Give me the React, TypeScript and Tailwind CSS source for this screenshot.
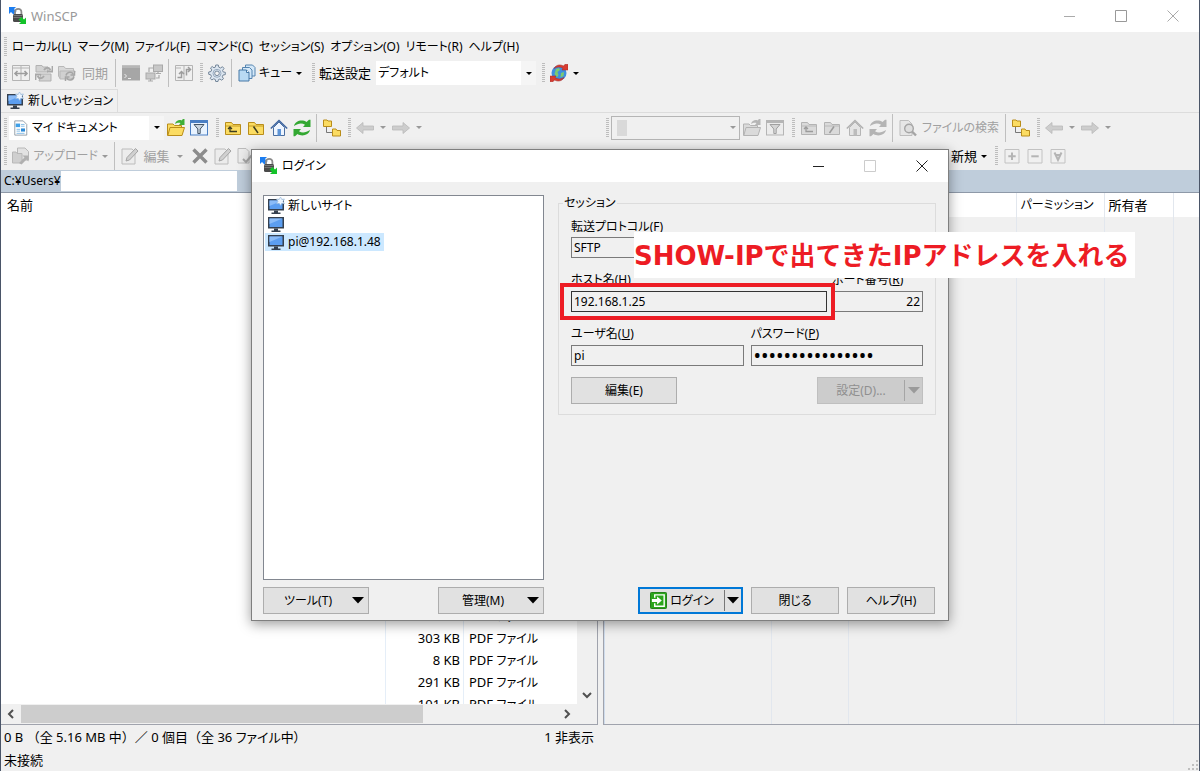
import React from "react";
import type { ReactNode } from "react";

/* ---------- toolbar primitives ---------- */

const Grip = ({ className = "" }: { className?: string }) => (
  <span className={`flex w-2 shrink-0 justify-center ${className}`}>
    <svg width="3" height="20" viewBox="0 0 3 20" aria-hidden="true">
      <path d="M1.5 0V20" stroke="#bdbdbd" strokeWidth="3" strokeDasharray="1 1" />
    </svg>
  </span>
);

const Sep = () => (
  <span className="flex w-[7px] shrink-0 justify-center">
    <span className="h-7 w-px bg-[#bfbfbf]" />
  </span>
);

const Tool = ({ label, children, className = "w-[23px]" }: { label: string; children: ReactNode; className?: string }) => (
  <button type="button" aria-label={label} className={`flex h-6 shrink-0 items-center justify-center ${className}`}>
    {children}
  </button>
);

const Caret = ({ color = "#000" }: { color?: string }) => (
  <svg width="6" height="3" viewBox="0 0 6 3" aria-hidden="true">
    <path d="M0 0H6L3 3Z" fill={color} />
  </svg>
);

const BigCaret = ({ color = "#000" }: { color?: string }) => (
  <svg width="12" height="7" viewBox="0 0 12 7" aria-hidden="true">
    <path d="M0 0H12L6 6.5Z" fill={color} />
  </svg>
);

/* ---------- icons ---------- */

const Svg = ({ children, size = 18 }: { children: ReactNode; size?: number }) => (
  <svg width={size} height={size} viewBox="0 0 18 18" fill="none" aria-hidden="true" className="shrink-0">
    {children}
  </svg>
);

const LockIcon = () => (
  <Svg>
    <path d="M0 0H7L5 2L7.500 4.500L4.500 7.500L2 5L0 7Z" fill="#1c7df0" />
    <path d="M6 8V5a3.200 3.200 0 0 1 6.400 0V8" stroke="#8b8b8b" strokeWidth="1.800" />
    <rect x="4" y="7" width="10" height="8" rx="1.500" fill="#4a4a4a" />
    <path d="M4.500 8.500H13.500M4.500 10.500H13.500" stroke="#777" />
    <path d="M17 17H10L12 15L9.500 12.500L12.500 10L15 12.500L17 10.500Z" fill="#14c32a" />
  </Svg>
);

const MonitorIcon = ({ star = false }: { star?: boolean }) => (
  <Svg>
    <rect x="1" y="2" width="16" height="11.500" fill="#35404f" />
    <rect x="2.500" y="3.500" width="13" height="8.500" fill="#5c9ef0" />
    <path d="M2.500 3.500H15.500L2.500 9Z" fill="#8bbcf8" />
    <path d="M7 13.500H11V15.500H13.500V17H4.500V15.500H7Z" fill="#35404f" />
    {star && <path d="M13.500 0L14.800 2.300L17.500 2L16 4.300L17.500 6.800L14.800 6.300L13.500 8.500L12.200 6.300L9.500 6.800L11 4.300L9.500 2L12.200 2.300Z" fill="#eef6ff" stroke="#8fb4d8" strokeWidth=".6" />}
  </Svg>
);

const CompareIcon = () => (
  <Svg>
    <path d="M.5 1.500H17.500V16.500H.5ZM9 1.500V16.500M.5 4H17.500" stroke="#b4b4b4" />
    <path d="M3 9.500H15M5.500 7L3 9.500L5.500 12M12.500 7L15 9.500L12.500 12" stroke="#9d9d9d" strokeWidth="1.600" />
  </Svg>
);

const SyncFoldersIcon = () => (
  <Svg>
    <path d="M1 1.500H7L8 3H13V8H1Z" fill="#d2d2d2" stroke="#b2b2b2" />
    <path d="M6 10H16V17H4Z" fill="#d2d2d2" stroke="#b2b2b2" />
    <path d="M9 6C11 3 14 3 15.500 6M17.500 2V7.500H12M9 12C7 15 4 15 2.500 12M.5 16V10.500H6" stroke="#a8a8a8" strokeWidth="1.800" />
  </Svg>
);

const FolderSyncIcon = () => (
  <Svg>
    <path d="M.5 2.500H6L7.500 4.500H15.500V14.500H2L.5 12Z" fill="#d8d8d8" stroke="#b8b8b8" />
    <path d="M2 7H17L15 15H2Z" fill="#d0d0d0" stroke="#b8b8b8" />
    <path d="M8 11.500C9 7.500 14 7.500 15 10M16.500 7V11H12.500M16 12.500C15 17 10 17 9 14M7.500 17V13H11.500" stroke="#a5a5a5" strokeWidth="1.500" />
  </Svg>
);

const TerminalIcon = () => (
  <Svg>
    <rect y="1.500" width="18" height="15" fill="#a6a6a6" />
    <path d="M0 1.500H18V4H0Z" fill="#b7b7b7" />
    <path d="M2.500 10L4.500 12L2.500 14M6 14.500H9" stroke="#eee" />
  </Svg>
);

const TwoPcIcon = () => (
  <Svg>
    <rect x="8.500" y="1" width="9" height="6.500" fill="#c8c8c8" stroke="#a9a9a9" />
    <rect x="1" y="9" width="9" height="6" fill="#c8c8c8" stroke="#a9a9a9" />
    <path d="M5.500 15V17M3 17H8M13 7.500V9.500M11 9.500H16M4 8V4H8M14 11V14H11" stroke="#a9a9a9" strokeWidth="1.200" />
  </Svg>
);

const BrowseSyncIcon = () => (
  <Svg>
    <path d="M.5 1.500H17.500V16.500H.5ZM.5 4H6M12 16.500H17.500M9 1.500V16.500" stroke="#b4b4b4" />
    <path d="M2.500 13.500H6.500V7.500M4 10L6.500 7.500L9 10M15.500 5.500H11.500V11.500M13 3L15.500 5.500L13 8" stroke="#9d9d9d" strokeWidth="1.500" />
  </Svg>
);

const GearIcon = () => (
  <Svg>
    <path d="M7.700 1H10.300L10.800 3.200L12.500 4L14.500 2.700L16 4.500L14.600 6.400L15.200 8L17.300 8.300V10.600L15 11L14.300 12.800L15.500 14.700L13.700 16.200L11.900 15L10.400 15.600L10 17.500H7.700L7.300 15.500L5.700 14.800L3.800 16L2.200 14.300L3.400 12.500L2.800 10.800L.7 10.300V8L3 7.500L3.700 5.900L2.500 4L4.200 2.500L6 3.800L7.300 3.200Z" fill="#dce6f0" stroke="#75879a" />
    <circle cx="9" cy="9.300" r="4" stroke="#98abc0" />
    <circle cx="9" cy="9.300" r="2.300" fill="#f3f3f3" stroke="#75879a" />
  </Svg>
);

const QueueIcon = () => (
  <Svg>
    <path d="M7.500 1H14.500L17 3.500V12H7.500Z" fill="#d4e8f8" stroke="#5484b0" />
    <path d="M4.500 3.500H11.500L14 6V14.500H4.500Z" fill="#d4e8f8" stroke="#5484b0" />
    <path d="M1 6H8.500L11 8.500V17H1Z" fill="#b9daf3" stroke="#4678a6" />
    <path d="M8.500 6V8.500H11" fill="#fff" stroke="#4678a6" />
  </Svg>
);

const GlobeSyncIcon = () => (
  <Svg>
    <circle cx="9" cy="9" r="7.500" fill="#3f8ee0" />
    <path d="M6 5L9 4L10 6L7.500 8L8.500 11L7 13.500L4.500 10ZM11 9L14 8L13.500 12L10.500 13.500Z" fill="#7ccb70" />
    <path d="M4 4.500C6 .8 10 0 13.500 2L15 .3H18V6H12L13 4.200C10 2.600 7 2.600 4 4.500Z" fill="#d73c32" stroke="#a52b24" strokeWidth=".5" />
    <path d="M14 13.500C12 17.200 8 18 4.500 16L3 17.700H0V12H6L5 13.800C8 15.400 11 15.400 14 13.500Z" fill="#d73c32" stroke="#a52b24" strokeWidth=".5" />
  </Svg>
);

const DocsIcon = () => (
  <Svg size={16}>
    <path d="M2 1H11.500L15.500 5V17H2Z" fill="#fff" stroke="#8b97a3" />
    <path d="M3 4H8V8H3Z" fill="#3fa0e8" />
    <path d="M9 5H13M9 7H13M4 10.500H8M4 12.500H8M4 15H13" stroke="#7bb7e4" />
    <path d="M9 9.500H13.500V13H9Z" fill="#2b8ad8" />
  </Svg>
);

const palette = (off: boolean) =>
  off
    ? { fill: "#dadada", line: "#b3b3b3", ink: "#9b9b9b", arrow: "#b5b5b5" }
    : { fill: "#fbdc62", line: "#b98d1a", ink: "#3d3d20", arrow: "#3faf38" };

const OpenFolderIcon = ({ off = false }: { off?: boolean }) => {
  const c = palette(off);
  return (
    <Svg>
      <path d="M.5 16.500V5H6L7.500 6.500H14.500V9" fill={c.fill} stroke={c.line} />
      <path d="M3 8.500H17.500L15 16.500H.8Z" fill={c.fill} stroke={c.line} />
      <path d="M8 5C9 1 13 .5 14.500 1.500L16 0H17.500V6H12L13.500 4C12 3.500 10 3.500 8 5Z" fill={c.arrow} />
    </Svg>
  );
};

const FilterIcon = ({ off = false }: { off?: boolean }) => {
  const a = off ? "#b5b5b5" : "#4a7fc4";
  return (
    <Svg>
      <rect x=".5" y="1.500" width="17" height="14.500" fill={off ? "#ececec" : "#e8f3ff"} stroke={a} />
      <path d="M1 2H17V4H1Z" fill={a} />
      <path d="M4 5.500H14L10.200 10V14.500H7.800V10Z" fill={off ? "#d5d5d5" : "#c9d4de"} stroke={off ? "#a0a0a0" : "#445566"} />
    </Svg>
  );
};

const FolderMarkIcon = ({ off = false, kind }: { off?: boolean; kind: "up" | "root" | "slash" }) => {
  const c = palette(off);
  return (
    <Svg>
      <path d="M1.500 3.500H7.500L9 5.500H16.500V15.500H1.500Z" fill={c.fill} stroke={c.line} />
      <path d="M2 7H16" stroke={c.line} strokeWidth=".8" />
      {kind === "up" && <path d="M6 8V12.500H13M4 10L6 8L8 10" stroke={c.ink} strokeWidth="1.300" />}
      {kind === "root" && <path d="M6.500 7.500L11 14" stroke={c.ink} strokeWidth="1.500" />}
      {kind === "slash" && <path d="M11 7.500L6.500 14" stroke={c.ink} strokeWidth="1.500" />}
    </Svg>
  );
};

const HomeIcon = ({ off = false }: { off?: boolean }) => (
  <Svg>
    <path d="M3.500 8.500V16.500H14.500V8.500L9 3Z" fill={off ? "#e4e4e4" : "#eef5ff"} stroke={off ? "#b5b5b5" : "#4a6ea0"} />
    <path d="M.8 9.500L9 1.500L17.200 9.500" stroke={off ? "#b0b0b0" : "#3d64a0"} strokeWidth="1.500" />
    <rect x="7.500" y="10" width="3.500" height="6.500" fill={off ? "#bcbcbc" : "#5d94d6"} />
  </Svg>
);

const RefreshIcon = ({ off = false }: { off?: boolean }) => {
  const c = off ? "#b4b4b4" : "#33a832";
  return (
    <Svg>
      <path d="M1 7C2 2 9 0 13.500 3L16 .8H17.500V8H10L12 5.800C8.500 3.500 5 4.500 1 7Z" fill={c} />
      <path d="M17 11C16 16 9 18 4.500 15L2 17.200H.5V10H8L6 12.200C9.500 14.500 13 13.500 17 11Z" fill={c} />
    </Svg>
  );
};

const TreeIcon = () => (
  <Svg>
    <path d="M3.500 8V13.500H10" stroke="#777" />
    <path d="M.5 1H4L5 2H8.500V7.500H.5ZM9.500 10H13L14 11.500H17.500V17H9.500Z" fill="#fbdc62" stroke="#b98d1a" />
  </Svg>
);

const ArrowIcon = ({ back = false }: { back?: boolean }) => (
  <Svg>
    <path
      d={back ? "M.5 9L7 3.500V7H17.500V11H7V14.500Z" : "M17.500 9L11 3.500V7H.5V11H11V14.500Z"}
      fill="#cdcdcd"
      stroke="#b9b9b9"
      strokeWidth=".8"
    />
  </Svg>
);

const UploadIcon = () => (
  <Svg>
    <path d="M5.500 1H13L16.500 4.500V13H5.500Z" fill="#e2e2e2" stroke="#b8b8b8" />
    <path d="M.5 5H4L5 6.500H10V16H.5Z" fill="#cfcfcf" stroke="#b8b8b8" />
    <path d="M7 16L12.500 10.500L10.500 8.500H16.500V14.500L14.500 12.500L9.500 17.500Z" fill="#b0b0b0" />
  </Svg>
);

const EditIcon = () => (
  <Svg>
    <path d="M1 2H11L14 5V17H1Z" fill="#ececec" stroke="#bcbcbc" />
    <path d="M5 14L6 10.500L14.500 1.500L17 4L8.500 13Z" fill="#d0d0d0" stroke="#a5a5a5" />
  </Svg>
);

const DeleteIcon = () => (
  <Svg>
    <path d="M2.500 2.500L15.500 15.500M15.500 2.500L2.500 15.500" stroke="#8c8c8c" strokeWidth="3.400" />
  </Svg>
);

const CheckDocIcon = () => (
  <Svg>
    <path d="M1 1.500H9L12 4.500V16H1Z" fill="#ececec" stroke="#bcbcbc" />
    <path d="M6 12L9 15L15 8" stroke="#a8a8a8" strokeWidth="2" />
  </Svg>
);

const FindIcon = () => (
  <Svg>
    <path d="M1 1.500H9.500L13 5V16.500H1Z" fill="#e6e6e6" stroke="#bdbdbd" />
    <circle cx="10" cy="9.500" r="4.300" fill="#dedede" stroke="#a5a5a5" strokeWidth="1.400" />
    <path d="M13 12.500L17 16.500" stroke="#a5a5a5" strokeWidth="2.400" />
  </Svg>
);

const BoxedIcon = ({ d }: { d: string }) => (
  <Svg>
    <path d="M2 2.500H16V16H2Z" stroke="#c2c2c2" />
    <path d={d} stroke="#b4b4b4" strokeWidth="2" />
  </Svg>
);

const LoginIcon = () => (
  <Svg size={17}>
    <rect x=".5" y=".5" width="17" height="17" rx="1" fill="#2ba51b" stroke="#1d7c12" />
    <path d="M5 6V3H15V15H5V12" stroke="#fff" strokeWidth="1.500" />
    <path d="M2 7.500H7.500V4.800L12.500 9L7.500 13.200V10.500H2Z" fill="#fff" />
  </Svg>
);

/* ---------- window controls ---------- */

const WindowButtons = ({ color, maxColor }: { color: string; maxColor: string }) => (
  <div className="flex">
    <button type="button" aria-label="最小化" className="flex h-8 w-[52px] items-center justify-center">
      <svg width="11" height="11" viewBox="0 0 11 11"><path d="M0 5.500H11" stroke={color} /></svg>
    </button>
    <button type="button" aria-label="最大化" className="flex h-8 w-[52px] items-center justify-center">
      <svg width="12" height="12" viewBox="0 0 12 12"><path d="M.5 .5H11.500V11.500H.5Z" stroke={maxColor} fill="none" /></svg>
    </button>
    <button type="button" aria-label="閉じる" className="flex h-8 w-[52px] items-center justify-center">
      <svg width="12" height="12" viewBox="0 0 12 12"><path d="M.5 .5L11.500 11.500M11.500 .5L.5 11.500" stroke={color} /></svg>
    </button>
  </div>
);

/* ---------- main window ---------- */

const menus = ["ローカル(L)", "マーク(M)", "ファイル(F)", "コマンド(C)", "セッション(S)", "オプション(O)", "リモート(R)", "ヘルプ(H)"];

const MainToolbar = () => (
  <div className="flex h-7 shrink-0 items-center">
    <Grip />
    <Tool label="比較"><CompareIcon /></Tool>
    <Tool label="同期参照"><SyncFoldersIcon /></Tool>
    <button type="button" className="flex h-6 items-center text-[#a0a0a0]">
      <span className="flex w-[23px] justify-center"><FolderSyncIcon /></span>
      <span className="px-1">同期</span>
    </button>
    <Sep />
    <Tool label="ターミナル"><TerminalIcon /></Tool>
    <Tool label="PuTTY"><TwoPcIcon /></Tool>
    <Sep />
    <Tool label="参照の同期"><BrowseSyncIcon /></Tool>
    <Grip className="ml-0.5" />
    <Tool label="環境設定"><GearIcon /></Tool>
    <Sep />
    <button type="button" className="flex h-6 w-[70px] items-center">
      <span className="flex w-[23px] shrink-0 justify-center"><QueueIcon /></span>
      <span className="grow text-center text-[12px] whitespace-nowrap">キュー</span>
      <span className="flex w-3 shrink-0 justify-center"><Caret /></span>
    </button>
    <Grip className="ml-1" />
    <label htmlFor="transfer" className="pr-[5px] pl-0.5">転送設定</label>
    <div className="relative">
      <select id="transfer" className="h-6 w-[160px] appearance-none bg-white pl-0.5 text-[12px]">
        <option>デフォルト</option>
      </select>
      <span className="pointer-events-none absolute inset-y-0 right-0 flex w-[15px] items-center justify-center bg-[#f5f5f5]"><Caret /></span>
    </div>
    <Grip className="ml-[3px]" />
    <Tool label="接続"><GlobeSyncIcon /></Tool>
    <Tool label="接続メニュー" className="w-3"><Caret /></Tool>
  </div>
);

const HistoryTools = () => (
  <>
    <Grip className="ml-0.5" />
    <Tool label="戻る"><ArrowIcon back /></Tool>
    <Tool label="戻る履歴" className="w-[13px]"><Caret color="#999" /></Tool>
    <Tool label="進む"><ArrowIcon /></Tool>
    <Tool label="進む履歴" className="w-[13px]"><Caret color="#999" /></Tool>
  </>
);

const NavTools = ({ off = false }: { off?: boolean }) => (
  <>
    <Tool label="フォルダを開く"><OpenFolderIcon off={off} /></Tool>
    <Tool label="フィルタ"><FilterIcon off={off} /></Tool>
    <Grip className="ml-[3px]" />
    <Tool label="親フォルダ"><FolderMarkIcon off={off} kind="up" /></Tool>
    <Tool label="ルート"><FolderMarkIcon off={off} kind={off ? "slash" : "root"} /></Tool>
    <Tool label="ホーム"><HomeIcon off={off} /></Tool>
    <Tool label="更新"><RefreshIcon off={off} /></Tool>
    <Sep />
  </>
);

const PaneToolbars = () => (
  <div className="grid shrink-0 grid-cols-2 border-t border-[#dcdcdc]">
    <div>
      <div className="flex h-[29px] items-center">
        <Grip />
        <div className="relative">
          <span className="pointer-events-none absolute inset-y-0 left-1 flex items-center"><DocsIcon /></span>
          <select aria-label="ローカルドライブ" className="h-6 w-[155px] appearance-none bg-white pl-[23px] text-[12px]">
            <option>マイ ドキュメント</option>
          </select>
          <span className="pointer-events-none absolute inset-y-0 right-0 flex w-[15px] items-center justify-center bg-[#f5f5f5]"><Caret /></span>
        </div>
        <NavTools />
        <Tool label="ツリー"><TreeIcon /></Tool>
        <HistoryTools />
      </div>
      <div className="flex h-[28px] items-center text-[#a0a0a0]">
        <Grip />
        <button type="button" className="flex h-6 w-[102px] items-center">
          <span className="flex w-[23px] shrink-0 justify-center"><UploadIcon /></span>
          <span className="grow text-center text-[12px] whitespace-nowrap">アップロード</span>
          <span className="flex w-3 shrink-0 justify-center"><Caret color="#999" /></span>
        </button>
        <Sep />
        <button type="button" className="flex h-6 w-[70px] items-center">
          <span className="flex w-[23px] justify-center"><EditIcon /></span>
          <span className="grow text-center">編集</span>
          <span className="flex w-4 justify-center"><Caret color="#999" /></span>
        </button>
        <Tool label="削除"><DeleteIcon /></Tool>
        <Tool label="名前の変更"><EditIcon /></Tool>
        <Tool label="プロパティ"><CheckDocIcon /></Tool>
      </div>
    </div>
    <div>
      <div className="flex h-[29px] items-center pl-[3px]">
        <Grip />
        <div className="relative">
          <span className="absolute top-1 left-1.5 h-4 w-2.5 bg-[#d9d9d9]" />
          <select aria-label="リモートディレクトリ" disabled className="h-6 w-[129px] appearance-none border border-[#b5b5b5] opacity-100">
            <option></option>
          </select>
          <span className="pointer-events-none absolute inset-y-0 right-0 flex w-[15px] items-center justify-center"><Caret color="#999" /></span>
        </div>
        <NavTools off />
        <button type="button" className="flex h-6 items-center text-[#a0a0a0]">
          <span className="flex w-[23px] justify-center"><FindIcon /></span>
          <span className="px-[3px] text-[12px] whitespace-nowrap">ファイルの検索</span>
        </button>
        <Sep />
        <Tool label="ツリー"><TreeIcon /></Tool>
        <HistoryTools />
      </div>
      <div className="flex h-[28px] items-center pl-[351px]">
        <button type="button" className="flex h-6 items-center">
          <span>新規</span>
          <span className="flex w-3.5 justify-center"><Caret /></span>
        </button>
        <Grip className="ml-px" />
        <Tool label="選択"><BoxedIcon d="M9 5.500V13M5.300 9.300H12.700" /></Tool>
        <Tool label="選択解除"><BoxedIcon d="M5.300 9.300H12.700" /></Tool>
        <Tool label="すべて選択"><BoxedIcon d="M5.500 5.500L9 13L12.500 5.500M7 8H11" /></Tool>
      </div>
    </div>
  </div>
);

const files = [
  { size: "6 KB", kind: "PDF" },
  { size: "303 KB", kind: "PDF" },
  { size: "8 KB", kind: "PDF" },
  { size: "291 KB", kind: "PDF" },
  { size: "101 KB", kind: "PDF" },
];

const Chevron = ({ d }: { d: string }) => (
  <svg width="10" height="10" viewBox="0 0 10 10" fill="none" aria-hidden="true">
    <path d={d} stroke="#505050" strokeWidth="2" />
  </svg>
);

const LocalPane = () => (
  <section className="flex min-h-0 min-w-0 flex-1 flex-col border-r border-b border-[#a0a3ad]">
    <div className="flex h-[22px] shrink-0 items-center bg-[#bfcddb] pl-[3px] text-[12px]">
      <span>C:¥Users¥</span>
      <span className="h-5 w-[176px] bg-white" />
    </div>
    <div className="flex min-h-0 flex-1 border-t border-[#8e99a8]">
      <div className="flex min-h-0 min-w-0 flex-1 flex-col justify-end overflow-hidden bg-white">
        <table className="-mb-[11px] h-full w-full grow table-fixed border-collapse">
          <colgroup>
            <col />
            <col className="w-[78px]" />
            <col className="w-[113px]" />
          </colgroup>
          <thead>
            <tr className="h-6">
              <th scope="col" className="border-r border-[#e5eef8] pl-1.5 text-left font-normal">名前</th>
              <th scope="col" className="border-r border-[#e5eef8]" />
              <th scope="col" />
            </tr>
          </thead>
          <tbody>
            <tr>
              <td className="border-r border-[#e5eef8]" />
              <td className="border-r border-[#e5eef8]" />
              <td />
            </tr>
            {files.map((f, i) => (
              <tr key={i} className="h-[22px]">
                <td className="border-r border-[#e5eef8]" />
                <td className="border-r border-[#e5eef8] pr-[3px] text-right">{f.size}</td>
                <td className="pl-[5px]">
                  {f.kind} <span className="text-[12px]">ファイル</span>
                </td>
              </tr>
            ))}
          </tbody>
        </table>
      </div>
      <div className="flex w-5 shrink-0 items-end justify-center pb-1">
        <Chevron d="M1 3L5 7L9 3" />
      </div>
    </div>
    <div className="flex h-[20px] shrink-0 items-center">
      <span className="flex w-5 justify-center"><Chevron d="M7 1L3 5L7 9" /></span>
      <span className="flex grow">
        <span className="h-[18px] w-3/4 bg-[#cdcdcd]" />
      </span>
      <span className="flex w-5 justify-center"><Chevron d="M3 1L7 5L3 9" /></span>
      <span className="w-5" />
    </div>
  </section>
);

const RemotePane = () => (
  <section className="flex min-h-0 min-w-0 flex-1 flex-col border-b border-l border-[#a0a3ad]">
    <div className="h-[22px] shrink-0 bg-[#bfcddb]" />
    <div className="min-h-0 flex-1 border-t border-[#8e99a8]">
      <table className="h-full w-full table-fixed border-collapse border-l border-[#cfdcec]">
        <colgroup>
          <col className="w-[167px]" />
          <col className="w-[77px]" />
          <col className="w-[168px]" />
          <col className="w-[88px]" />
          <col className="w-[69px]" />
          <col />
        </colgroup>
        <thead>
          <tr className="h-6 bg-white">
            <th className="border-r border-[#e2e7ee]" />
            <th className="border-r border-[#e2e7ee]" />
            <th className="border-r border-[#e2e7ee]" />
            <th scope="col" className="border-r border-[#e2e7ee] pl-1 text-left text-[12px] font-normal whitespace-nowrap">パーミッション</th>
            <th scope="col" className="border-r border-[#e2e7ee] pl-1 text-left font-normal">所有者</th>
            <th />
          </tr>
        </thead>
        <tbody>
          <tr>
            <td className="border-r border-[#e2e7ee]" />
            <td className="border-r border-[#e2e7ee]" />
            <td className="border-r border-[#e2e7ee]" />
            <td className="border-r border-[#e2e7ee]" />
            <td className="border-r border-[#e2e7ee]" />
            <td />
          </tr>
        </tbody>
      </table>
    </div>
  </section>
);

/* ---------- login dialog ---------- */

const Key = ({ text, k }: { text: string; k: string }) => (
  <>
    {text}(<u>{k}</u>)
  </>
);

const fieldClass = "h-[21px] w-full border bg-[#f0f0f0] px-0.5";
const labelClass = "block h-4 leading-4 whitespace-nowrap";
const buttonClass = "flex h-[27px] items-center justify-center border border-[#adadad] bg-[#e1e1e1]";

const LoginDialog = () => (
  <div
    role="dialog"
    aria-label="ログイン"
    className="absolute top-[149px] left-1/2 w-[698px] -translate-x-1/2 border border-[#7f7f7f] bg-[#f0f0f0] text-[12px] shadow-[0_3px_12px_rgba(0,0,0,0.4)]"
  >
    <div className="flex h-8 items-center justify-between bg-white pl-2">
      <div className="flex items-center gap-1">
        <LockIcon />
        <span>ログイン</span>
      </div>
      <WindowButtons color="#222" maxColor="#ccc" />
    </div>
    <div className="flex gap-[14px] pt-[13px] pr-3 pb-1.5 pl-[11px]">
      <div className="w-[281px] shrink-0">
        <ul className="h-[385px] border border-[#828790] bg-white p-px">
          <li className="flex h-[18px] items-center gap-[3px] pl-0.5">
            <MonitorIcon star />
            <span>新しいサイト</span>
          </li>
          <li className="flex h-[18px] items-center pl-0.5">
            <MonitorIcon />
          </li>
          <li className="flex h-[18px] w-fit items-center gap-[3px] bg-[#cce8ff] pr-[3px] pl-0.5">
            <MonitorIcon />
            <span>pi@192.168.1.48</span>
          </li>
        </ul>
        <div className="mt-[7px] flex justify-between">
          <button type="button" className={`${buttonClass} w-[106px] pr-1`}>
            <span className="grow text-center">ツール(T)</span>
            <BigCaret />
          </button>
          <button type="button" className={`${buttonClass} w-[106px] pr-1`}>
            <span className="grow text-center">管理(M)</span>
            <BigCaret />
          </button>
        </div>
      </div>
      <div className="flex grow flex-col justify-between">
        <fieldset className="border border-[#dcdcdc] px-3 pb-[10px]">
          <legend className="-ml-2 h-4 px-px leading-4">セッション</legend>
          <div className="flex flex-col gap-[14px] pt-2">
            <div>
              <label htmlFor="protocol" className={`${labelClass} mb-0.5`}><Key text="転送プロトコル" k="F" /></label>
              <select id="protocol" className="h-[21px] w-[150px] appearance-none border border-[#7a7a7a] px-0.5">
                <option>SFTP</option>
              </select>
            </div>
            <div className="flex gap-[5px]">
              <div className="w-[256px]">
                <label htmlFor="host" className={`${labelClass} mb-[3px]`}><Key text="ホスト名" k="H" /></label>
                <input id="host" readOnly value="192.168.1.25" className={`${fieldClass} border-[#333]`} />
              </div>
              <div className="min-w-0 flex-1">
                <label htmlFor="port" className={`${labelClass} mb-[3px]`}><Key text="ポート番号" k="R" /></label>
                <input id="port" readOnly value="22" className={`${fieldClass} border-[#7a7a7a] text-right`} />
              </div>
            </div>
            <div className="grid grid-cols-2 gap-[7px]">
              <div>
                <label htmlFor="user" className={`${labelClass} mb-[3px]`}><Key text="ユーザ名" k="U" /></label>
                <input id="user" readOnly value="pi" className={`${fieldClass} border-[#7a7a7a]`} />
              </div>
              <div>
                <label htmlFor="pass" className={`${labelClass} mb-[3px]`}><Key text="パスワード" k="P" /></label>
                <input id="pass" type="password" readOnly value="raspberrypi12345" className={`${fieldClass} border-[#7a7a7a] text-[20px]`} />
              </div>
            </div>
          </div>
          <div className="mt-[10px] flex justify-between">
            <button type="button" className={`${buttonClass} w-[106px]`}>編集(E)</button>
            <button type="button" disabled className="flex h-[27px] w-[106px] items-center border border-[#bfbfbf] bg-[#cccccc] text-[#8f8f8f]">
              <span className="grow text-center">設定(D)...</span>
              <span className="flex h-[21px] w-[18px] items-center justify-center border-l border-[#a5a5a5]"><BigCaret color="#9a9a9a" /></span>
            </button>
          </div>
        </fieldset>
        <div className="flex justify-end gap-2 pr-px">
          <button type="button" className="flex h-[27px] w-[105px] items-center border-2 border-[#0078d7] bg-[#e1e1e1]">
            <span className="flex grow items-center justify-center gap-[3px]">
              <LoginIcon />
              <span>ログイン</span>
            </span>
            <span className="flex h-[21px] w-[17px] items-center justify-center border-l border-[#777]"><BigCaret /></span>
          </button>
          <button type="button" className={`${buttonClass} w-[88px]`}>閉じる</button>
          <button type="button" className={`${buttonClass} w-[88px]`}>ヘルプ(H)</button>
        </div>
      </div>
    </div>
    <div className="absolute top-[133px] left-[308px] h-[37px] w-[275px] border-4 border-[#ed1c24]" />
    <div className="absolute top-[82px] left-[382px] flex h-[46px] w-[501px] items-center bg-white pt-px font-['DejaVu_Sans','Noto_Sans_CJK_JP',sans-serif] text-[26px] font-bold whitespace-nowrap text-[#ed1c24] [font-feature-settings:normal]">
      SHOW-IPで出てきたIPアドレスを入れる
    </div>
  </div>
);

export default function App() {
  return (
    <div className="relative flex h-screen flex-col overflow-hidden border-x border-[#4a5568] bg-[#f0f0f0] font-['Noto_Sans','Noto_Sans_CJK_JP',sans-serif] text-[13px] leading-4 text-black [font-feature-settings:'palt']">
      <header className="flex h-8 shrink-0 items-center justify-between bg-white pl-2">
        <div className="flex items-center gap-1 text-[#999]">
          <LockIcon />
          <h1>WinSCP</h1>
        </div>
        <WindowButtons color="#aaa" maxColor="#999" />
      </header>
      <nav className="flex h-[27px] shrink-0 items-center pt-0.5">
        <Grip className="mr-[3px]" />
        <ul className="flex gap-1.5 text-[12px]">
          {menus.map((m) => (
            <li key={m}>
              <button type="button" className="whitespace-nowrap">{m}</button>
            </li>
          ))}
        </ul>
      </nav>
      <MainToolbar />
      <div className="flex h-[25px] shrink-0 items-end">
        <button type="button" className="flex h-[23px] items-center gap-1 border-t border-r border-[#dcdcdc] pr-1 pl-[5px] text-[12px] whitespace-nowrap">
          <MonitorIcon star />
          <span>新しいセッション</span>
        </button>
      </div>
      <PaneToolbars />
      <main className="flex min-h-0 flex-1">
        <LocalPane />
        <div className="w-[5px] shrink-0" />
        <RemotePane />
      </main>
      <footer className="shrink-0">
        <div className="grid h-[23px] grid-cols-2 items-center">
          <div className="flex justify-between pr-1.5 pl-[3px] whitespace-nowrap">
            <span>
              <span className="[font-feature-settings:normal]">0 B （全 5.16 MB 中）／ 0 個目（全 36 </span>
              <span>ファイル中）</span>
            </span>
            <span>1 非表示</span>
          </div>
        </div>
        <div className="flex h-[23px] items-center justify-between pl-[3px]">
          <span>未接続</span>
          <svg width="12" height="12" viewBox="0 0 12 12" className="self-end" aria-hidden="true">
            <path d="M9 1h2v2h-2zM9 5h2v2h-2zM9 9h2v2h-2zM5 5h2v2h-2zM5 9h2v2h-2zM1 9h2v2h-2z" fill="#bfbfbf" />
          </svg>
        </div>
      </footer>
      <LoginDialog />
    </div>
  );
}
